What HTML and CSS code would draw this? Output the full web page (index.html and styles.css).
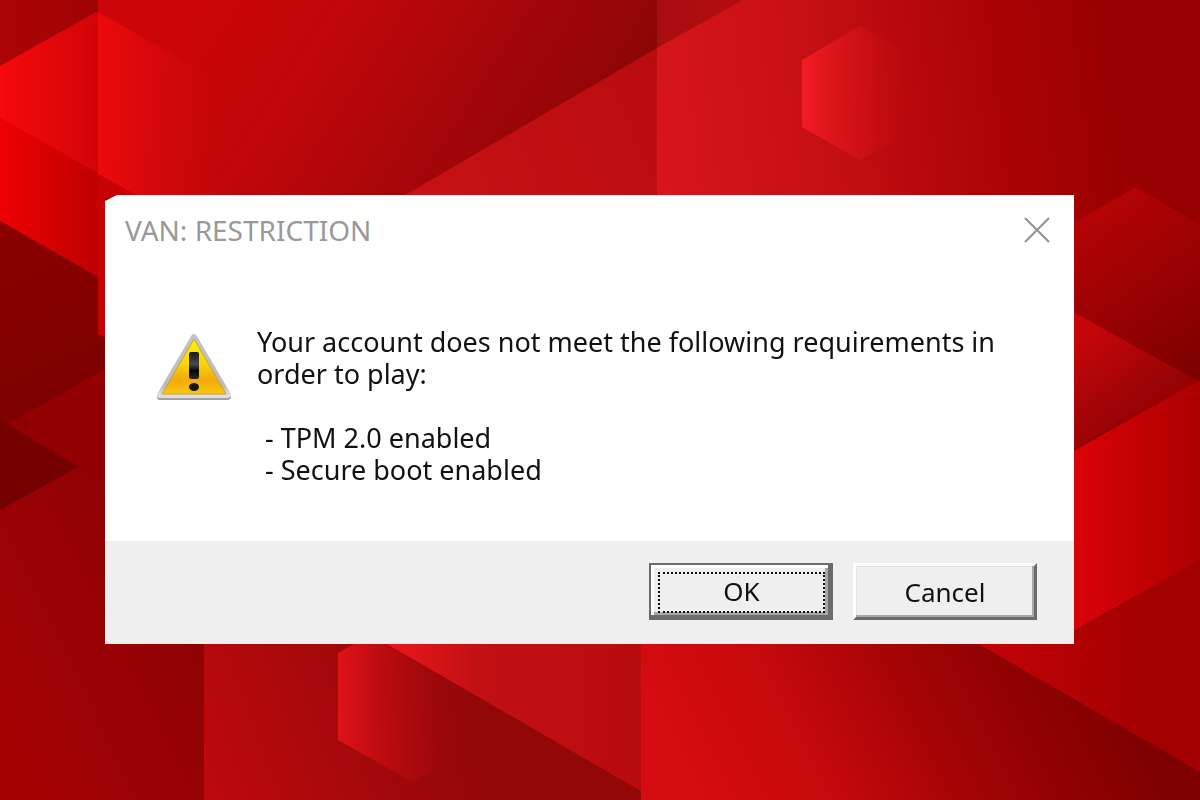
FILE: index.html
```html
<!DOCTYPE html>
<html lang="en">
<head>
<meta charset="utf-8">
<meta name="viewport" content="width=device-width, initial-scale=1">
<title>VAN: RESTRICTION</title>
<link rel="stylesheet" href="styles.css">
</head>
<body>
<svg class="backdrop" viewBox="0 0 1200 800" preserveAspectRatio="none" aria-hidden="true">
  <defs>
    <linearGradient id="top" gradientUnits="userSpaceOnUse" x1="180" y1="20" x2="520" y2="240"><stop offset="0" stop-color="#cc0509"/><stop offset=".35" stop-color="#bf070a"/><stop offset="1" stop-color="#8e0508"/></linearGradient>
    <linearGradient id="corner"><stop offset="0" stop-color="#ac0405"/><stop offset="1" stop-color="#a00203"/></linearGradient>
    <linearGradient id="hexA"><stop offset="0" stop-color="#f5090d"/><stop offset="1" stop-color="#d20408"/></linearGradient>
    <linearGradient id="hexB"><stop offset="0" stop-color="#ed090c"/><stop offset=".85" stop-color="#d30a0e" stop-opacity="0"/></linearGradient>
    <linearGradient id="hexC"><stop offset="0" stop-color="#ee0002"/><stop offset="1" stop-color="#bf0001"/></linearGradient>
    <linearGradient id="slope" gradientUnits="userSpaceOnUse" x1="410" y1="200" x2="700" y2="60"><stop offset="0" stop-color="#c81115"/><stop offset="1" stop-color="#b80b0e"/></linearGradient>
    <linearGradient id="panel" gradientUnits="userSpaceOnUse" x1="657" y1="150" x2="1200" y2="90"><stop offset="0" stop-color="#d7151a"/><stop offset=".28" stop-color="#c71014"/><stop offset=".6" stop-color="#ae0406"/><stop offset=".82" stop-color="#9b0001"/><stop offset="1" stop-color="#950001"/></linearGradient>
    <linearGradient id="notch"><stop offset="0" stop-color="#a70d10"/><stop offset="1" stop-color="#b60c0f"/></linearGradient>
    <linearGradient id="hexD"><stop offset="0" stop-color="#f31c25"/><stop offset="1" stop-color="#c00a0d" stop-opacity="0"/></linearGradient>
    <linearGradient id="hexE" gradientUnits="userSpaceOnUse" x1="1080" y1="220" x2="1190" y2="370"><stop offset="0" stop-color="#b50305"/><stop offset="1" stop-color="#7f0000"/></linearGradient>
    <linearGradient id="wedge" gradientUnits="userSpaceOnUse" x1="1074" y1="340" x2="1140" y2="420"><stop offset="0" stop-color="#c6060a"/><stop offset="1" stop-color="#920305"/></linearGradient>
    <linearGradient id="right" gradientUnits="userSpaceOnUse" x1="1074" y1="0" x2="1200" y2="0"><stop offset="0" stop-color="#da0307"/><stop offset="1" stop-color="#ac0001"/></linearGradient>
    <linearGradient id="lower" gradientUnits="userSpaceOnUse" x1="980" y1="640" x2="1150" y2="640"><stop offset="0" stop-color="#c40306"/><stop offset="1" stop-color="#a30001"/></linearGradient>
    <linearGradient id="left" gradientUnits="userSpaceOnUse" x1="0" y1="250" x2="80" y2="420"><stop offset="0" stop-color="#8a0000"/><stop offset="1" stop-color="#7c0000"/></linearGradient>
    <linearGradient id="base" gradientUnits="userSpaceOnUse" x1="0" y1="700" x2="204" y2="600"><stop offset="0" stop-color="#a40103"/><stop offset="1" stop-color="#8c0203"/></linearGradient>
    <linearGradient id="mid" gradientUnits="userSpaceOnUse" x1="204" y1="770" x2="450" y2="680"><stop offset="0" stop-color="#bc090d"/><stop offset="1" stop-color="#940709"/></linearGradient>
    <linearGradient id="hexF"><stop offset="0" stop-color="#e01218"/><stop offset="1" stop-color="#a00608" stop-opacity="0"/></linearGradient>
    <linearGradient id="ramp" gradientUnits="userSpaceOnUse" x1="390" y1="0" x2="641" y2="0"><stop offset="0" stop-color="#e9171c"/><stop offset=".35" stop-color="#c21013"/><stop offset="1" stop-color="#b80b0e"/></linearGradient>
    <linearGradient id="floor" gradientUnits="userSpaceOnUse" x1="670" y1="760" x2="1050" y2="570"><stop offset="0" stop-color="#d60b10"/><stop offset=".3" stop-color="#c5090c"/><stop offset=".68" stop-color="#9b0203"/><stop offset="1" stop-color="#800001"/></linearGradient>
  </defs>
  <rect width="1200" height="800" fill="#900001"/>
  <path d="M98 0H657V48L400 198H98Z" fill="url(#top)"/>
  <path d="M0 0H98V12L0 66Z" fill="url(#corner)"/>
  <path d="M98 12L204 72 240 92V200H140L98 174Z" fill="url(#hexB)"/>
  <path d="M0 66L96 12 98 13V174L0 118Z" fill="url(#hexA)"/>
  <path d="M98 174L140 197H105V338L98 334Z" fill="#c60205"/>
  <path d="M0 118L98 173V277L0 221Z" fill="url(#hexC)"/>
  <path d="M0 221L98 277V334L110 340V366L8 424H0Z" fill="url(#left)"/>
  <path d="M8 424L110 366V483Z" fill="#920001"/>
  <path d="M0 420L78 467 0 510Z" fill="#740000"/>
  <path d="M0 510L78 467 110 484V640H204V800H0Z" fill="url(#base)"/>
  <path d="M400 198L657 48V198Z" fill="url(#slope)"/>
  <path d="M657 0H1200V420H657Z" fill="url(#panel)"/>
  <path d="M657 0H743L657 48Z" fill="url(#notch)"/>
  <path d="M802 60L860 26 920 60V126L860 160 802 127Z" fill="url(#hexD)"/>
  <path d="M1070 225L1136 187 1200 225V382L1070 312Z" fill="url(#hexE)"/>
  <path d="M1070 310L1190 377 1070 452Z" fill="url(#wedge)"/>
  <path d="M1070 453L1200 380V560L1070 633Z" fill="url(#right)"/>
  <path d="M204 640H641V800H204Z" fill="url(#mid)"/>
  <path d="M338 653L370 635H400L470 680V748L413 782 338 740Z" fill="url(#hexF)"/>
  <path d="M380 640H641V791Z" fill="url(#ramp)"/>
  <path d="M641 640H1200V800H641Z" fill="url(#floor)"/>
  <path d="M972 640H1062L1200 560V772Z" fill="url(#lower)"/>
</svg>
<main class="stage">
  <section class="dialog" role="alertdialog" aria-labelledby="title" aria-describedby="message">
    <header class="titlebar">
      <h1 class="title" id="title">VAN: RESTRICTION</h1>
      <button class="close" type="button" aria-label="Close">
        <svg width="26" height="26" viewBox="0 0 26 26" aria-hidden="true"><path d="M1 1L25 25M25 1L1 25" fill="none" stroke="#919191" stroke-width="2"/></svg>
      </button>
    </header>
    <div class="content">
      <svg class="warning" width="78" height="70" viewBox="0 0 78 70" role="img" aria-label="Warning">
        <defs>
          <linearGradient id="yellow" x2="0" y2="1"><stop offset="0" stop-color="#fff200"/><stop offset=".45" stop-color="#f7d50a"/><stop offset=".75" stop-color="#f4a90c"/><stop offset="1" stop-color="#f8c80b"/></linearGradient>
          <linearGradient id="ink" x2="0" y2="1"><stop offset="0" stop-color="#171717"/><stop offset=".45" stop-color="#4b4b46"/><stop offset=".7" stop-color="#050505"/><stop offset="1" stop-color="#2b2a22"/></linearGradient>
          <linearGradient id="rim" x2="0" y2="1"><stop offset="0" stop-color="#c4c4c4"/><stop offset=".85" stop-color="#bcbcbc"/><stop offset="1" stop-color="#dedede"/></linearGradient>
        </defs>
        <path d="M39 5L73 64H5Z" fill="#999" stroke="#a2a2a2" stroke-width="6" stroke-linejoin="round"/>
        <path d="M39 4L73 62H5Z" fill="#ccc" stroke="url(#rim)" stroke-width="6" stroke-linejoin="round"/>
        <path d="M39 6L71 61H7Z" fill="url(#yellow)" stroke="#c5a33a" stroke-width="1"/>
        <rect x="34" y="19" width="10" height="27" rx="2" fill="url(#ink)"/>
        <ellipse cx="39" cy="54" rx="5" ry="4" fill="#17170f"/>
      </svg>
      <div class="message" id="message">
        <p>Your account does not meet the following requirements in order to play:</p>
        <p class="requirements">- TPM 2.0 enabled<br>- Secure boot enabled</p>
      </div>
    </div>
    <footer class="actions">
      <button class="button default" type="button"><span class="focus">OK</span></button>
      <button class="button" type="button">Cancel</button>
    </footer>
  </section>
</main>
</body>
</html>
```
FILE: styles.css
```css
* { box-sizing: border-box; }
body {
  margin: 0;
  min-height: 100vh;
  background: #900001;
  color: #111;
  font-family: "Noto Sans", "Open Sans", sans-serif;
  font-size: 27px;
  line-height: 32px;
}
.backdrop {
  position: fixed;
  inset: 0;
  z-index: -1;
  width: 100%;
  height: 100%;
}
.stage { padding: 195px 126px 40px 105px; }
.dialog {
  background: #fff;
  clip-path: polygon(0 6px, 12px 0, 100% 0, 100% 100%, 0 100%);
}
.titlebar {
  display: flex;
  align-items: center;
  justify-content: space-between;
  padding: 14px 24px 0 20px;
  height: 56px;
}
.title {
  margin: 0;
  color: #999;
  font-size: 28px;
  font-weight: 400;
  line-height: 40px;
}
.close {
  display: flex;
  padding: 0;
  border: 0;
  background: none;
}
.content {
  display: flex;
  align-items: flex-start;
  gap: 24px;
  padding: 75px 72px 55px 50px;
}
.warning { flex: none; margin-top: 7px; }
.message { flex: 1; }
.message p { margin: 0; }
.message .requirements {
  margin-top: 32px;
  padding-left: 8px;
}
.actions {
  display: flex;
  justify-content: flex-end;
  gap: 20px;
  padding: 22px 37px 24px;
  background: #efefef;
}
.button {
  display: flex;
  align-items: center;
  justify-content: center;
  width: 184px;
  height: 57px;
  padding: 0;
  border: 3px solid;
  border-color: #fff #6b6b6b #6b6b6b #fff;
  background: #efefef;
  box-shadow: inset -2px -2px #a8a8a8, inset 1px 1px #e3e3e3;
  color: #111;
  font: inherit;
  font-size: 26px;
  line-height: 32px;
}
.default {
  padding: 7px 3px 2px 7px;
  border-width: 2px 5px 5px 2px;
  border-color: #6b6b6b;
  box-shadow: inset 3px 3px #fff, inset -3px -3px #a8a8a8;
}
.focus {
  width: 100%;
  height: 100%;
  border: 2px dotted #111;
  line-height: 34px;
}
```
